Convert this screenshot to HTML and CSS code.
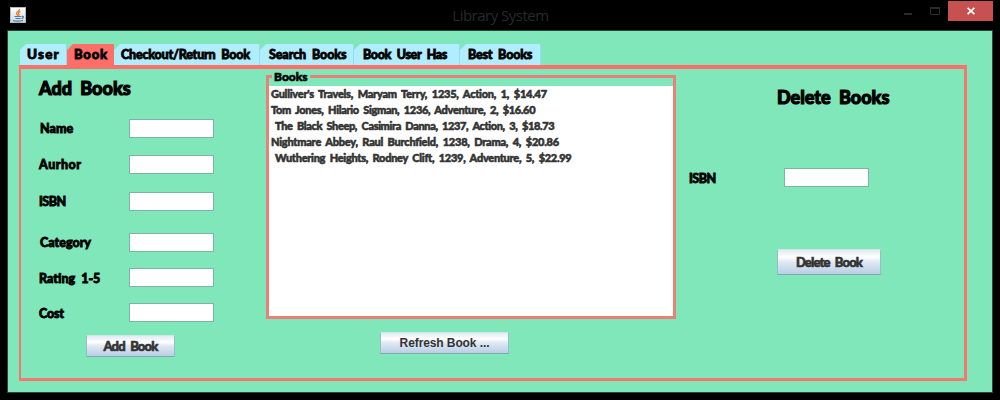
FILE: index.html
```html
<!DOCTYPE html>
<html lang="en">
<head>
<meta charset="utf-8">
<title>Library System</title>
<link rel="stylesheet" href="styles.css">
</head>
<body>
<div class="window">
  <header class="titlebar">
    <svg class="app-icon" width="16" height="16" viewBox="0 0 16 16">
      <defs><linearGradient id="tile" x2="0" y2="1"><stop offset="0" stop-color="#fff"/><stop offset="1" stop-color="#cbd8e1"/></linearGradient></defs>
      <rect x=".5" y=".5" width="15" height="15" fill="url(#tile)" stroke="#aebbc5"/>
      <path d="M9.500 2C10 4 6 4.500 6.500 6.500C6.700 7.500 8 7.800 8 9M10.500 4.500C8.500 5 8 6 8.800 7C9.500 8 8.700 8.500 8.300 9" fill="none" stroke="#ed812f" stroke-width="1.400"/>
      <path d="M4.500 9.500H11M5.500 11.500H10.500M3 13.500C5 14.200 10 14.200 13 13.500M11.500 9.500C14 8.500 14 11 11.500 11.500" fill="none" stroke="#4c7797" stroke-width="1.200"/>
    </svg>
    <h1 class="title">Library System</h1>
    <div class="controls">
      <svg class="glyphs" width="45" height="20" viewBox="0 0 45 20"><path d="M1 13h8v2H1z" fill="#2b2b2b"/><path d="M27.500 8v6.500h9V8" fill="none" stroke="#2b2b2b"/><path d="M27 7h10v2H27z" fill="#2b2b2b"/></svg>
      <div class="close"><svg width="8" height="8" viewBox="0 0 8 8"><path d="M.6 .8L7.400 7.200M7.400 .8L.6 7.200" stroke="#fff" stroke-width="1.700"/></svg></div>
    </div>
  </header>
  <main class="content">
    <nav class="tabs">
      <div class="tab user"><span>User</span></div>
      <div class="tab book active"><span>Book</span></div>
      <div class="tab checkout"><span>Checkout/Return Book</span></div>
      <div class="tab search"><span>Search Books</span></div>
      <div class="tab has"><span>Book User Has</span></div>
      <div class="tab best"><span>Best Books</span></div>
    </nav>
    <section class="pane">
      <div class="add">
        <h2 class="heading">Add Books</h2>
        <div class="form">
          <label class="l-name">Name</label><input class="field">
          <label class="l-author">Aurhor</label><input class="field">
          <label class="l-isbn">ISBN</label><input class="field">
          <label class="l-category">Category</label><input class="field">
          <label class="l-rating">Rating 1-5</label><input class="field">
          <label class="l-cost">Cost</label><input class="field">
        </div>
        <button class="btn btn-add">Add Book</button>
      </div>
      <div class="middle">
        <fieldset class="books">
          <legend>Books</legend>
          <ul class="list">
            <li class="b1">Gulliver's Travels, Maryam Terry, 1235, Action, 1, $14.47</li>
            <li class="b2">Tom Jones, Hilario Sigman, 1236, Adventure, 2, $16.60</li>
            <li class="b3">The Black Sheep, Casimira Danna, 1237, Action, 3, $18.73</li>
            <li class="b4">Nightmare Abbey, Raul Burchfield, 1238, Drama, 4, $20.86</li>
            <li class="b5">Wuthering Heights, Rodney Clift, 1239, Adventure, 5, $22.99</li>
          </ul>
        </fieldset>
        <button class="btn btn-refresh">Refresh Book ...</button>
      </div>
      <div class="delete">
        <h2 class="heading heading-delete">Delete Books</h2>
        <div class="delete-row"><label class="l-isbn">ISBN</label><input class="field"></div>
        <button class="btn btn-delete">Delete Book</button>
      </div>
    </section>
  </main>
</div>
</body>
</html>
```

FILE: styles.css
```css
* { box-sizing: border-box; }
body { margin: 0; background: #000; color: #000; font-family: Lato, "Open Sans", sans-serif; font-weight: 900; overflow: hidden; }
.window { width: 1000px; height: 400px; padding: 0 7px 7px; }
.titlebar { height: 30px; display: grid; grid-template-columns: 110px 1fr 110px; align-items: start; }
.app-icon { margin: 7px 0 0 3px; }
.title { margin: 5px 0 0; padding-left: 1px; text-align: center; color: #292929; font: 400 15px/21px "Open Sans", sans-serif; letter-spacing: -.5px; }
.controls { display: flex; justify-content: flex-end; }
.close { width: 45px; height: 20px; margin-top: 1px; background: #c75050; display: flex; align-items: center; justify-content: center; }
.content { height: 363px; border: 1px solid #26483b; background: #80e7bb; padding: 13px 0 0 11px; }
.tabs { display: flex; height: 21px; padding-left: 1px; }
.tab { height: 21px; background: #b0edff; clip-path: polygon(0 6px, 6px 0, 100% 0, 100% 100%, 0 100%); border-right: 1px solid #94dce9; font-size: 12.5px; line-height: 21px; white-space: nowrap; word-spacing: 3px; letter-spacing: -.1px; -webkit-text-stroke: .8px; }
.active { background: #ff6e68; border-color: #ff6e68; }
.user { width: 47px; padding-left: 7px; font-size: 13.5px; letter-spacing: 1.200px; }
.book { width: 47px; padding-left: 7px; font-size: 13px; letter-spacing: .8px; }
.checkout { width: 146px; padding-left: 7px; letter-spacing: -.2px; }
.search { width: 94px; padding-left: 9px; }
.has { width: 106px; padding-left: 9px; letter-spacing: -.35px; }
.best { width: 81px; padding-left: 8px; letter-spacing: -.2px; }
.pane { width: 948px; height: 316px; border: 2px solid #f5776f; border-top: 4px solid #fc706a; border-bottom-width: 3px; border-right-width: 3px; display: flex; }
.add { width: 245px; padding: 8px 0 0 18px; }
.heading { margin: 0; font-size: 18px; line-height: 22px; font-weight: 900; word-spacing: 4px; -webkit-text-stroke: 1.1px; white-space: nowrap; }
.form { display: grid; grid-template-columns: 90px 85px; grid-template-rows: 36px 37px 41px 35px 35px 19px; margin-top: 20px; align-items: start; }
label { font-size: 12.500px; line-height: 19px; -webkit-text-stroke: .8px; white-space: nowrap; }
.l-name { padding-left: 1px; }
.l-author { letter-spacing: .5px; }
.l-isbn { letter-spacing: -.5px; }
.l-category { padding-left: 1px; }
.l-rating { line-height: 21px; word-spacing: 3px; }
.l-cost { line-height: 21px; letter-spacing: -.2px; }
.field { width: 85px; height: 19px; padding: 0; background: #fff; border: 1px solid #7eb3a6; border-radius: 0; outline: 0; }
.btn { display: block; padding: 0; border: 1px solid; border-color: #c9e9e2 #9cbcc5 #83a7ae; background: linear-gradient(#e2eaf4, #fff 30%, #dfe8f3 50%, #b8cfe5); color: #333; font-family: inherit; font-size: 13px; font-weight: 900; letter-spacing: -.8px; word-spacing: 3px; -webkit-text-stroke: .6px; white-space: nowrap; }
.btn-add { width: 89px; height: 22px; margin: 13px 0 0 47px; }
.middle { width: 410px; }
.books { margin: 0; padding: 0; min-width: 0; width: 410px; height: 250px; border: 3px solid #e98178; }
legend { margin-left: 3px; padding: 0 2px; font-size: 12px; line-height: 15px; height: 15px; -webkit-text-stroke: .6px; }
.list { margin: 2px 0 0; padding: 0 0 0 2px; height: 230px; list-style: none; background: #fff; color: #333; font-size: 11px; line-height: 16px; letter-spacing: -.25px; word-spacing: 2.200px; -webkit-text-stroke: .55px; white-space: nowrap; overflow: hidden; }
.b2 { letter-spacing: -.34px; }
.b3, .b5 { padding-left: 4px; }
.b3 { letter-spacing: -.38px; }
.b4 { letter-spacing: -.25px; }
.b5 { letter-spacing: -.29px; }
.btn-refresh { width: 129px; height: 22px; margin: 13px 0 0 114px; font: 700 12px "Liberation Sans", sans-serif; letter-spacing: -.1px; word-spacing: 0; -webkit-text-stroke: 0; }
.delete { padding: 17px 0 0 13px; }
.heading-delete { padding-left: 88px; }
.delete-row { display: flex; margin-top: 60px; }
.delete-row label { width: 95px; line-height: 21px; }
.btn-delete { width: 104px; height: 26px; margin: 60px 0 0 88px; letter-spacing: -.85px; }
```
